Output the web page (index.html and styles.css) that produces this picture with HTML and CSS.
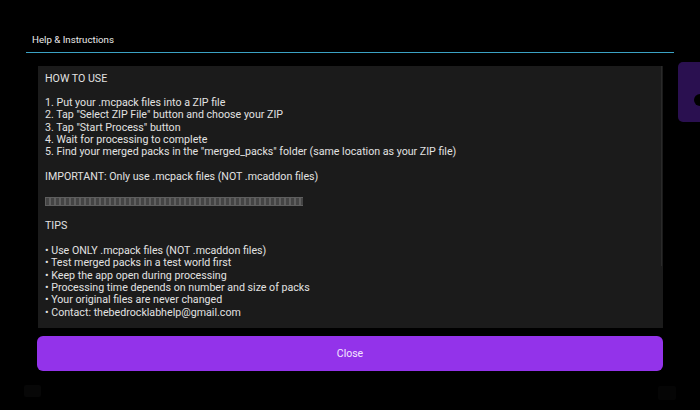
FILE: index.html
```html
<!DOCTYPE html>
<html>
<head>
<meta charset="utf-8">
<link rel="stylesheet" href="styles.css">
</head>
<body>
<div class="backdrop-tab"><span class="tab-notch"></span></div>
<div class="ghost ghost-left"></div>
<div class="ghost ghost-right"></div>
<div class="dialog">
  <div class="dialog-title">Help &amp; Instructions</div>
  <div class="dialog-body">
    <div class="help-box">
      <div class="help-text">HOW TO USE

1. Put your .mcpack files into a ZIP file
2. Tap "Select ZIP File" button and choose your ZIP
3. Tap "Start Process" button
4. Wait for processing to complete
5. Find your merged packs in the "merged_packs" folder (same location as your ZIP file)

IMPORTANT: Only use .mcpack files (NOT .mcaddon files)

<span class="tofu-line" aria-label="separator"></span>

TIPS

• Use ONLY .mcpack files (NOT .mcaddon files)
• Test merged packs in a test world first
• Keep the app open during processing
• Processing time depends on number and size of packs
• Your original files are never changed
• Contact: thebedrocklabhelp@gmail.com</div>
      <div class="scroll-edge"></div>
    </div>
    <button class="close-btn">Close</button>
  </div>
</div>
</body>
</html>
```

FILE: styles.css
```css
html, body {
  margin: 0;
  padding: 0;
  background: #000;
  width: 700px;
  height: 410px;
  overflow: hidden;
  font-family: Roboto, "Noto Sans", sans-serif;
}

.backdrop-tab {
  position: absolute;
  left: 678px;
  top: 62px;
  width: 30px;
  height: 60px;
  background: #2a1050;
  border-radius: 5px;
}

.tab-notch {
  position: absolute;
  right: 8px;
  top: 32px;
  width: 6px;
  height: 12px;
  background: #000;
  border-radius: 6px 0 0 6px;
}

.ghost {
  position: absolute;
  background: #070707;
  border-radius: 2px;
}

.ghost-left {
  left: 24px;
  top: 385px;
  width: 17px;
  height: 12px;
}

.ghost-right {
  left: 658px;
  top: 386px;
  width: 18px;
  height: 14px;
  background: #050505;
}

.dialog {
  position: relative;
  margin: 0 26px;
}

.dialog-title {
  padding: 33px 0 5px 6px;
  font-size: 9.7px;
  line-height: 14px;
  color: #ececec;
  border-bottom: 1.5px solid #3ba2c4;
}

.dialog-body {
  padding: 13px 11px 0 11px;
  display: flex;
  flex-direction: column;
  gap: 8px;
}

.help-box {
  position: relative;
  margin-left: 1px;
  height: 262px;
  background: #1b1b1b;
  box-sizing: border-box;
  padding: 6.5px 7px 0 7px;
}

.scroll-edge {
  position: absolute;
  right: 1px;
  top: 0;
  width: 1px;
  height: 200px;
  background: #2a2a2a;
}

.help-text {
  white-space: pre-wrap;
  font-size: 10.65px;
  line-height: 12.33px;
  color: #e2e2e2;
}

.tofu-line {
  display: inline-block;
  width: 258px;
  height: 9px;
  vertical-align: -1px;
  background:
    repeating-linear-gradient(90deg, #6b6b6b 0 1px, #4c4c4c 1px 4px, #6b6b6b 4px 5px);
  border-top: 1px solid #6b6b6b;
  border-bottom: 1px solid #6b6b6b;
  box-sizing: border-box;
  opacity: 0.85;
}

.close-btn {
  height: 35px;
  border: none;
  border-radius: 6px;
  background: #9333ea;
  color: #f3e6ff;
  font-family: Roboto, "Noto Sans", sans-serif;
  font-size: 10.5px;
  padding: 0;
}
```
